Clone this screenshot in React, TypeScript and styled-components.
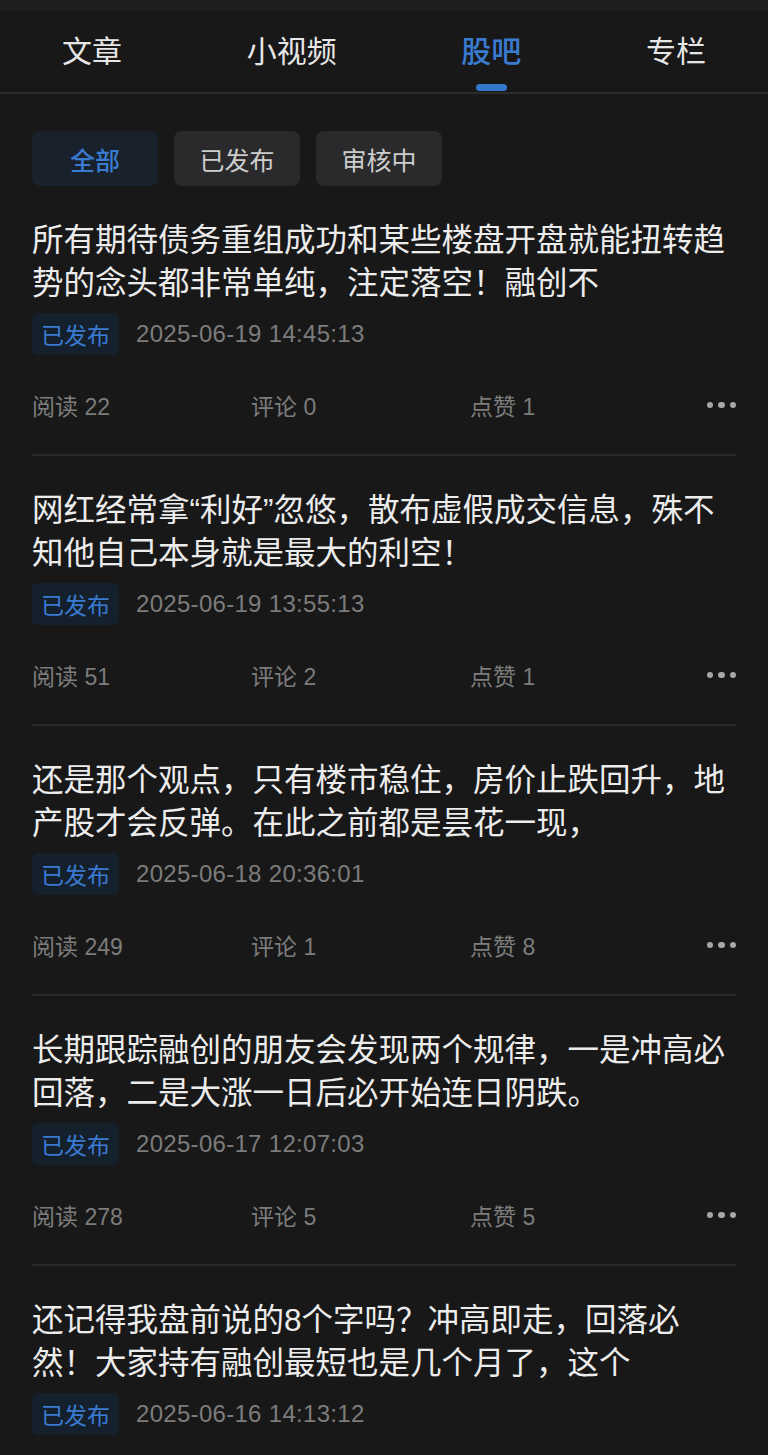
import { FC } from 'react';
import styled, { createGlobalStyle } from 'styled-components';

const GlobalStyle = createGlobalStyle`
  html, body {
    margin: 0;
    padding: 0;
    background: #181818;
    overflow: hidden;
  }
  body {
    font-family: "Liberation Sans", "Noto Sans CJK SC", sans-serif;
    -webkit-font-smoothing: antialiased;
  }
`;

const Page = styled.div`
  width: 768px;
  height: 1455px;
  overflow: hidden;
  background: #181818;
  display: flex;
  flex-direction: column;
`;

const StatusStrip = styled.div`
  height: 10px;
  background: #1f1f1f;
  flex-shrink: 0;
`;

const TabBar = styled.nav`
  display: flex;
  justify-content: space-between;
  padding: 21px 62px 1px;
  border-bottom: 2px solid #2c2c2c;
  flex-shrink: 0;
`;

const Tab = styled.div`
  display: flex;
  flex-direction: column;
  align-items: center;
`;

const TabLabel = styled.span<{ $active?: boolean }>`
  font-size: 30px;
  line-height: 42px;
  color: ${({ $active }) => ($active ? '#3a7bd2' : '#e6e6e6')};
  font-weight: ${({ $active }) => ($active ? 500 : 400)};
`;

const TabIndicator = styled.span<{ $active?: boolean }>`
  margin-top: 11px;
  width: 31px;
  height: 7px;
  border-radius: 4px;
  background: ${({ $active }) => ($active ? '#3478cc' : 'transparent')};
`;

const Content = styled.main`
  padding: 37px 32px 0;
`;

const FilterRow = styled.div`
  display: flex;
  gap: 16px;
`;

const FilterChip = styled.button<{ $active?: boolean }>`
  width: 126px;
  height: 55px;
  border: none;
  border-radius: 8px;
  padding: 0;
  font-family: inherit;
  font-size: 25px;
  font-weight: ${({ $active }) => ($active ? 500 : 400)};
  background: ${({ $active }) => ($active ? '#18212c' : '#2a2a2c')};
  color: ${({ $active }) => ($active ? '#3a7bd2' : '#cdcdcd')};
`;

const PostItem = styled.article`
  padding: 33px 0 29px;
  border-bottom: 2px solid #2a2a2a;
`;

const PostTitle = styled.h3`
  margin: 0;
  font-size: 31.5px;
  line-height: 43px;
  font-weight: 400;
  color: #ececec;
`;

const MetaRow = styled.div`
  display: flex;
  align-items: center;
  gap: 17px;
  margin-top: 8px;
`;

const StatusBadge = styled.span`
  height: 42px;
  padding: 0 9px;
  border-radius: 6px;
  display: inline-flex;
  align-items: center;
  font-size: 23px;
  background: #15202d;
  color: #3a7bd2;
`;

const DateText = styled.span`
  font-size: 24px;
  letter-spacing: 0.3px;
  color: #7c7c7c;
`;

const StatsRow = styled.div`
  display: flex;
  align-items: center;
  height: 40px;
  margin-top: 30px;
`;

const Stat = styled.span`
  width: 219px;
  font-size: 23px;
  color: #7c7c7c;
`;

const MoreButton = styled.button`
  margin-left: auto;
  display: flex;
  gap: 5px;
  padding: 0;
  border: none;
  background: none;
`;

const Dot = styled.span`
  width: 6.5px;
  height: 6.5px;
  border-radius: 50%;
  background: #a6a6a6;
`;

interface Post {
  title: string;
  date: string;
  reads: number;
  comments: number;
  likes: number;
}

const TABS = ['文章', '小视频', '股吧', '专栏'];
const FILTERS = ['全部', '已发布', '审核中'];

const POSTS: Post[] = [
  {
    title: '所有期待债务重组成功和某些楼盘开盘就能扭转趋势的念头都非常单纯，注定落空！融创不',
    date: '2025-06-19 14:45:13',
    reads: 22,
    comments: 0,
    likes: 1,
  },
  {
    title: '网红经常拿“利好”忽悠，散布虚假成交信息，殊不知他自己本身就是最大的利空！',
    date: '2025-06-19 13:55:13',
    reads: 51,
    comments: 2,
    likes: 1,
  },
  {
    title: '还是那个观点，只有楼市稳住，房价止跌回升，地产股才会反弹。在此之前都是昙花一现，',
    date: '2025-06-18 20:36:01',
    reads: 249,
    comments: 1,
    likes: 8,
  },
  {
    title: '长期跟踪融创的朋友会发现两个规律，一是冲高必回落，二是大涨一日后必开始连日阴跌。',
    date: '2025-06-17 12:07:03',
    reads: 278,
    comments: 5,
    likes: 5,
  },
  {
    title: '还记得我盘前说的8个字吗？冲高即走，回落必然！大家持有融创最短也是几个月了，这个',
    date: '2025-06-16 14:13:12',
  reads: 0,
    comments: 0,
    likes: 0,
  },
];

// the last post is cut by the bottom of the screen, so its stats row is not drawn
const PostCard: FC<{ post: Post; showStats: boolean }> = ({ post, showStats }) => (
  <PostItem>
    <PostTitle>{post.title}</PostTitle>
    <MetaRow>
      <StatusBadge>已发布</StatusBadge>
      <DateText>{post.date}</DateText>
    </MetaRow>
    {showStats && (
      <StatsRow>
        <Stat>阅读 {post.reads}</Stat>
        <Stat>评论 {post.comments}</Stat>
        <Stat>点赞 {post.likes}</Stat>
        <MoreButton type="button" aria-label="更多">
          <Dot />
          <Dot />
          <Dot />
        </MoreButton>
      </StatsRow>
    )}
  </PostItem>
);

export default function App() {
  const activeTab = '股吧';
  const activeFilter = '全部';

  return (
    <Page>
      <GlobalStyle />
      <StatusStrip />
      <TabBar>
        {TABS.map((tab) => (
          <Tab key={tab}>
            <TabLabel $active={tab === activeTab}>{tab}</TabLabel>
            <TabIndicator $active={tab === activeTab} />
          </Tab>
        ))}
      </TabBar>
      <Content>
        <FilterRow>
          {FILTERS.map((f) => (
            <FilterChip key={f} type="button" $active={f === activeFilter}>
              {f}
            </FilterChip>
          ))}
        </FilterRow>
        {POSTS.map((post, i) => (
          <PostCard key={post.date} post={post} showStats={i < POSTS.length - 1} />
        ))}
      </Content>
    </Page>
  );
}
